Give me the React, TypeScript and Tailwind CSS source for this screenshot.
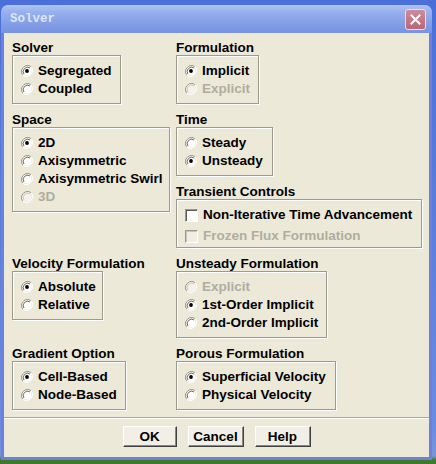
import React from "react";

const FONT = { fontFamily: '"Liberation Sans", Arial, sans-serif' };

function Radio({ checked, disabled }: { checked?: boolean; disabled?: boolean }) {
  return (
    <svg width="12" height="12" viewBox="0 0 12 12" className="shrink-0">
      <path d="M10.2 1.8 A6 6 0 0 0 1.8 10.2" fill="none" stroke="#9a988c" strokeWidth="1" />
      <path d="M1.8 10.2 A6 6 0 0 0 10.2 1.8" fill="none" stroke="#ffffff" strokeWidth="1" />
      <circle cx="6" cy="6" r="4.5" fill={disabled ? "#f4f2ea" : "#ffffff"} />
      <path d="M9 3 A4.3 4.3 0 0 0 3 9" fill="none" stroke={disabled ? "#c8c6ba" : "#5a5a5a"} strokeWidth="0.9" />
      {checked && <circle cx="6" cy="6" r="1.9" fill="#000" />}
    </svg>
  );
}

function Check({ disabled }: { disabled?: boolean }) {
  return (
    <span
      className={
        "block h-[13px] w-[13px] shrink-0 border-t border-l border-b border-r border-t-[#9a988c] border-l-[#9a988c] border-b-white border-r-white " +
        (disabled ? "bg-[#efede4] shadow-[inset_1px_1px_0_#c8c6ba]" : "bg-white shadow-[inset_1px_1px_0_#5a5a5a]")
      }
    />
  );
}

function Opt({ label, checked, disabled }: { label: string; checked?: boolean; disabled?: boolean }) {
  return (
    <div className="flex h-[18px] items-center gap-[5px]">
      <Radio checked={checked} disabled={disabled} />
      <span className={disabled ? "text-[#b0ada0]" : "text-black"}>{label}</span>
    </div>
  );
}

function Group({
  label,
  width,
  pb = "pb-[5px]",
  children,
}: {
  label: string;
  width: string;
  pb?: string;
  children: React.ReactNode;
}) {
  return (
    <div>
      <div className="h-[15px] leading-[15px]">{label}</div>
      <div
        className={
          width +
          " " +
          pb +
          " border border-[#9c9a8e] pl-[8px] pt-[6px] shadow-[inset_1px_1px_0_#ffffff,1px_1px_0_#ffffff]"
        }
      >
        {children}
      </div>
    </div>
  );
}

function Btn({ label, width }: { label: string; width: string }) {
  return (
    <button
      type="button"
      className={
        width +
        " h-[21px] border border-t-white border-l-white border-b-[#404040] border-r-[#404040] bg-[#f1efe6] text-[13.5px] font-bold leading-none shadow-[inset_-1px_-1px_0_#8a887e]"
      }
      style={FONT}
    >
      {label}
    </button>
  );
}

export default function App() {
  return (
    <div className="h-[464px] w-[436px] overflow-hidden bg-[linear-gradient(to_bottom,#4a6fd8_0px,#6a8ce2_430px,#7896d8_456px,#3f7a2c_460px)] pl-[1px] pt-[5px]">
      <div className="h-[455px] w-[431px] overflow-hidden rounded-t-[7px] bg-[#6f7fdc]">
        {/* title bar */}
        <div className="flex h-[28px] items-center justify-between bg-[linear-gradient(to_bottom,#b0c3f4_0%,#97b0ef_25%,#829de6_70%,#7893e1_100%)] pl-[9px] pr-[6px]">
          <span
            className="text-[12.5px] font-bold text-[#dde6f8]"
            style={{ fontFamily: '"Liberation Mono", "Courier New", monospace' }}
          >
            Solver
          </span>
          <span className="flex h-[21px] w-[21px] items-center justify-center rounded-[3px] border border-[#f0d8de] bg-[linear-gradient(to_bottom,#d08c98,#b96676)]">
            <svg width="11" height="11" viewBox="0 0 11 11">
              <path d="M1.5 1.5 L9.5 9.5 M9.5 1.5 L1.5 9.5" stroke="#fff" strokeWidth="2" strokeLinecap="square" />
            </svg>
          </span>
        </div>
        {/* client */}
        <div
          className="mx-[3px] h-[424px] bg-[#ece9d8] pt-[7px] text-[13.5px] font-bold text-black"
          style={FONT}
        >
          <div className="flex flex-col gap-[8px] pl-[8px]">
            <div className="flex">
              <div className="w-[164px]">
                <Group label="Solver" width="w-[109px]">
                  <Opt label="Segregated" checked />
                  <Opt label="Coupled" />
                </Group>
              </div>
              <Group label="Formulation" width="w-[83px]">
                <Opt label="Implicit" checked />
                <Opt label="Explicit" disabled />
              </Group>
            </div>

            <div className="flex">
              <div className="w-[164px]">
                <Group label="Space" width="w-[158px]">
                  <Opt label="2D" checked />
                  <Opt label="Axisymmetric" />
                  <Opt label="Axisymmetric Swirl" />
                  <Opt label="3D" disabled />
                </Group>
              </div>
              <div className="flex flex-col gap-[8px]">
                <Group label="Time" width="w-[97px]">
                  <Opt label="Steady" />
                  <Opt label="Unsteady" checked />
                </Group>
                <Group label="Transient Controls" width="w-[246px]" pb="pb-[2px]">
                  <div className="flex flex-col gap-[3px]">
                    <div className="flex h-[18px] items-center gap-[5px]">
                      <Check />
                      <span>Non-Iterative Time Advancement</span>
                    </div>
                    <div className="flex h-[18px] items-center gap-[5px]">
                      <Check disabled />
                      <span className="text-[#b0ada0]">Frozen Flux Formulation</span>
                    </div>
                  </div>
                </Group>
              </div>
            </div>

            <div className="flex">
              <div className="w-[164px]">
                <Group label="Velocity Formulation" width="w-[91px]">
                  <Opt label="Absolute" checked />
                  <Opt label="Relative" />
                </Group>
              </div>
              <Group label="Unsteady Formulation" width="w-[151px]">
                <Opt label="Explicit" disabled />
                <Opt label="1st-Order Implicit" checked />
                <Opt label="2nd-Order Implicit" />
              </Group>
            </div>

            <div className="flex">
              <div className="w-[164px]">
                <Group label="Gradient Option" width="w-[114px]">
                  <Opt label="Cell-Based" checked />
                  <Opt label="Node-Based" />
                </Group>
              </div>
              <Group label="Porous Formulation" width="w-[160px]">
                <Opt label="Superficial Velocity" checked />
                <Opt label="Physical Velocity" />
              </Group>
            </div>
          </div>

          <div className="mt-[7px] border-t border-[#aca899] shadow-[0_1px_0_#ffffff]" />
          <div className="flex justify-center gap-[11px] pt-[8px]">
            <Btn label="OK" width="w-[54px]" />
            <Btn label="Cancel" width="w-[56px]" />
            <Btn label="Help" width="w-[56px]" />
          </div>
        </div>
      </div>
    </div>
  );
}
